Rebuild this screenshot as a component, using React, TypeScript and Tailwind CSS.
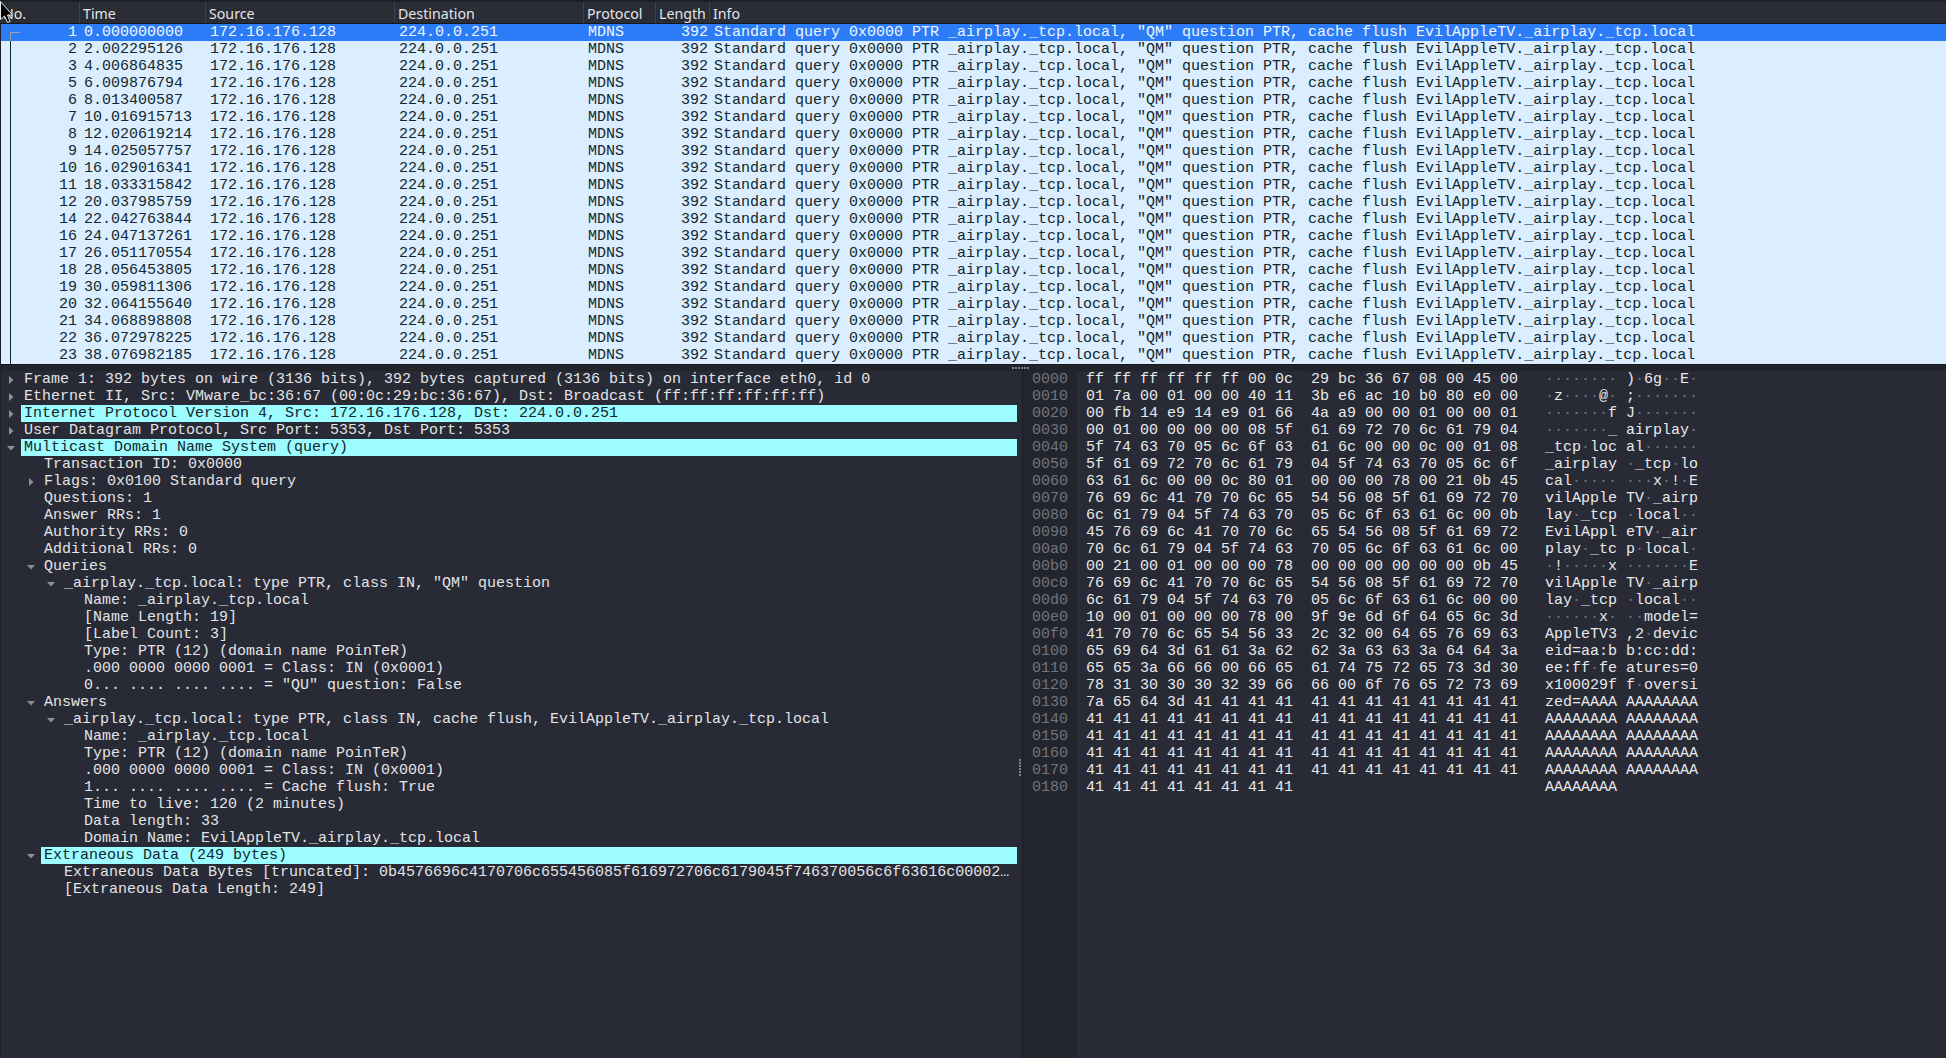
import * as React from "react";

const packets = [
  ["1", "0.000000000"],
  ["2", "2.002295126"],
  ["3", "4.006864835"],
  ["5", "6.009876794"],
  ["6", "8.013400587"],
  ["7", "10.016915713"],
  ["8", "12.020619214"],
  ["9", "14.025057757"],
  ["10", "16.029016341"],
  ["11", "18.033315842"],
  ["12", "20.037985759"],
  ["14", "22.042763844"],
  ["16", "24.047137261"],
  ["17", "26.051170554"],
  ["18", "28.056453805"],
  ["19", "30.059811306"],
  ["20", "32.064155640"],
  ["21", "34.068898808"],
  ["22", "36.072978225"],
  ["23", "38.076982185"],
];

const info =
  'Standard query 0x0000 PTR _airplay._tcp.local, "QM" question PTR, cache flush EvilAppleTV._airplay._tcp.local';

type TreeRow = { level: number; text: string; arrow?: "right" | "down"; hl?: boolean };

const tree: TreeRow[] = [
  { level: 0, arrow: "right", text: "Frame 1: 392 bytes on wire (3136 bits), 392 bytes captured (3136 bits) on interface eth0, id 0" },
  { level: 0, arrow: "right", text: "Ethernet II, Src: VMware_bc:36:67 (00:0c:29:bc:36:67), Dst: Broadcast (ff:ff:ff:ff:ff:ff)" },
  { level: 0, arrow: "right", hl: true, text: "Internet Protocol Version 4, Src: 172.16.176.128, Dst: 224.0.0.251" },
  { level: 0, arrow: "right", text: "User Datagram Protocol, Src Port: 5353, Dst Port: 5353" },
  { level: 0, arrow: "down", hl: true, text: "Multicast Domain Name System (query)" },
  { level: 1, text: "Transaction ID: 0x0000" },
  { level: 1, arrow: "right", text: "Flags: 0x0100 Standard query" },
  { level: 1, text: "Questions: 1" },
  { level: 1, text: "Answer RRs: 1" },
  { level: 1, text: "Authority RRs: 0" },
  { level: 1, text: "Additional RRs: 0" },
  { level: 1, arrow: "down", text: "Queries" },
  { level: 2, arrow: "down", text: '_airplay._tcp.local: type PTR, class IN, "QM" question' },
  { level: 3, text: "Name: _airplay._tcp.local" },
  { level: 3, text: "[Name Length: 19]" },
  { level: 3, text: "[Label Count: 3]" },
  { level: 3, text: "Type: PTR (12) (domain name PoinTeR)" },
  { level: 3, text: ".000 0000 0000 0001 = Class: IN (0x0001)" },
  { level: 3, text: '0... .... .... .... = "QU" question: False' },
  { level: 1, arrow: "down", text: "Answers" },
  { level: 2, arrow: "down", text: "_airplay._tcp.local: type PTR, class IN, cache flush, EvilAppleTV._airplay._tcp.local" },
  { level: 3, text: "Name: _airplay._tcp.local" },
  { level: 3, text: "Type: PTR (12) (domain name PoinTeR)" },
  { level: 3, text: ".000 0000 0000 0001 = Class: IN (0x0001)" },
  { level: 3, text: "1... .... .... .... = Cache flush: True" },
  { level: 3, text: "Time to live: 120 (2 minutes)" },
  { level: 3, text: "Data length: 33" },
  { level: 3, text: "Domain Name: EvilAppleTV._airplay._tcp.local" },
  { level: 1, arrow: "down", hl: true, text: "Extraneous Data (249 bytes)" },
  { level: 2, text: "Extraneous Data Bytes [truncated]: 0b4576696c4170706c655456085f616972706c6179045f746370056c6f63616c00002…" },
  { level: 2, text: "[Extraneous Data Length: 249]" },
];

const hexDump = [
  "ff ff ff ff ff ff 00 0c 29 bc 36 67 08 00 45 00",
  "01 7a 00 01 00 00 40 11 3b e6 ac 10 b0 80 e0 00",
  "00 fb 14 e9 14 e9 01 66 4a a9 00 00 01 00 00 01",
  "00 01 00 00 00 00 08 5f 61 69 72 70 6c 61 79 04",
  "5f 74 63 70 05 6c 6f 63 61 6c 00 00 0c 00 01 08",
  "5f 61 69 72 70 6c 61 79 04 5f 74 63 70 05 6c 6f",
  "63 61 6c 00 00 0c 80 01 00 00 00 78 00 21 0b 45",
  "76 69 6c 41 70 70 6c 65 54 56 08 5f 61 69 72 70",
  "6c 61 79 04 5f 74 63 70 05 6c 6f 63 61 6c 00 0b",
  "45 76 69 6c 41 70 70 6c 65 54 56 08 5f 61 69 72",
  "70 6c 61 79 04 5f 74 63 70 05 6c 6f 63 61 6c 00",
  "00 21 00 01 00 00 00 78 00 00 00 00 00 00 0b 45",
  "76 69 6c 41 70 70 6c 65 54 56 08 5f 61 69 72 70",
  "6c 61 79 04 5f 74 63 70 05 6c 6f 63 61 6c 00 00",
  "10 00 01 00 00 00 78 00 9f 9e 6d 6f 64 65 6c 3d",
  "41 70 70 6c 65 54 56 33 2c 32 00 64 65 76 69 63",
  "65 69 64 3d 61 61 3a 62 62 3a 63 63 3a 64 64 3a",
  "65 65 3a 66 66 00 66 65 61 74 75 72 65 73 3d 30",
  "78 31 30 30 30 32 39 66 66 00 6f 76 65 72 73 69",
  "7a 65 64 3d 41 41 41 41 41 41 41 41 41 41 41 41",
  "41 41 41 41 41 41 41 41 41 41 41 41 41 41 41 41",
  "41 41 41 41 41 41 41 41 41 41 41 41 41 41 41 41",
  "41 41 41 41 41 41 41 41 41 41 41 41 41 41 41 41",
  "41 41 41 41 41 41 41 41 41 41 41 41 41 41 41 41",
  "41 41 41 41 41 41 41 41",
];

const mono = "font-['Liberation_Mono',monospace] text-[15px] leading-[17px] whitespace-pre";

const indentWidth = ["w-[20px]", "w-[40px]", "w-[60px]", "w-[80px]"];

const Arrow = ({ dir }: { dir: "right" | "down" }) => (
  <svg width="8" height="8" viewBox="0 0 8 8" className="text-[#8d9098]">
    {dir === "right" ? (
      <polygon points="2,0 6.5,4 2,8" fill="currentColor" />
    ) : (
      <polygon points="0,2 8,2 4,6.5" fill="currentColor" />
    )}
  </svg>
);

const HeaderCell = ({ className, label }: { className: string; label: string }) => (
  <div className={`${className} h-full pl-[3px] border-r border-[#40434d] leading-[23px]`}>{label}</div>
);

const AsciiCell = ({ byte }: { byte: string }) => {
  const code = parseInt(byte, 16);
  if (code > 32 && code < 127) return <span>{String.fromCharCode(code)}</span>;
  return <span className="text-[#6f727b]">·</span>;
};

const HexLine = ({ line, index }: { line: string; index: number }) => {
  const bytes = line.split(" ");
  const first = bytes.slice(0, 8);
  const second = bytes.slice(8);
  const offset = (index * 16).toString(16).padStart(4, "0");
  return (
    <div className={`flex h-[17px] ${mono}`}>
      <div className="w-[54px] shrink-0 bg-[#23252e] pl-[9px] text-[#71747c]">{offset}</div>
      <div className="w-[234px] shrink-0 pl-[9px]">{first.join(" ")}</div>
      <div className="w-[234px] shrink-0">{second.join(" ")}</div>
      <div className="w-[81px] shrink-0">
        {first.map((b, i) => (
          <AsciiCell key={i} byte={b} />
        ))}
      </div>
      <div>
        {second.map((b, i) => (
          <AsciiCell key={i} byte={b} />
        ))}
      </div>
    </div>
  );
};

const App: React.FC = () => {
  return (
    <div className="relative flex h-[1058px] w-[1946px] flex-col overflow-hidden bg-[#282a35] text-[#e3e4e7]">
      {/* packet list */}
      <div className="flex h-[24px] shrink-0 items-center border-t-2 border-b border-t-[#1e2028] border-b-[#16181d] bg-[#2a2c36] font-['Noto_Sans',sans-serif] text-[14.2px] text-[#e4e5e8]">
        <HeaderCell className="w-[80px]" label="No." />
        <HeaderCell className="w-[126px]" label="Time" />
        <HeaderCell className="w-[189px]" label="Source" />
        <HeaderCell className="w-[189px]" label="Destination" />
        <HeaderCell className="w-[72px]" label="Protocol" />
        <HeaderCell className="w-[54px]" label="Length" />
        <div className="h-full flex-1 pl-[3px] leading-[23px]">Info</div>
      </div>
      <div className="relative shrink-0 border-l border-[#1e2028]">
        {packets.map(([no, time], i) => (
          <div
            key={no}
            className={`flex h-[17px] ${mono} ${i === 0 ? "bg-[#2c7bf7] text-[#eef5ff]" : "bg-[#daeeff] text-[#12272e]"}`}
          >
            <div className="w-[79px] pr-[3px] text-right">{no}</div>
            <div className="w-[126px] pl-[4px]">{time}</div>
            <div className="w-[189px] pl-[4px]">172.16.176.128</div>
            <div className="w-[189px] pl-[4px]">224.0.0.251</div>
            <div className="w-[73px] pl-[4px]">MDNS</div>
            <div className="w-[53px] pr-[2px] text-right">392</div>
            <div className="flex-1 pl-[4px]">{info}</div>
          </div>
        ))}
        <div className="absolute left-[9px] top-[8px] h-px w-[10px] bg-[#9aa0a8]" />
        <div className="absolute left-[9px] top-[8px] h-[9px] w-px bg-[#9aa0a8]" />
        <div className="absolute left-[9px] top-[17px] bottom-0 w-px bg-[#12272e]" />
      </div>

      {/* split handle */}
      <div className="flex h-[7px] shrink-0 items-start border-t border-[#15171c] bg-[#22242c] pl-[1012px]">
        <div className="mt-[2px] flex gap-[1px]">
          {[0, 1, 2, 3, 4, 5].map((d) => (
            <div key={d} className="h-[2px] w-[2px] bg-[#7d8088]" />
          ))}
        </div>
      </div>

      <div className="flex flex-1">
        {/* packet details */}
        <div className="w-[1017px] shrink-0 border-l border-[#1e2028]">
          {tree.map((row, i) => (
            <div key={i} className={`flex h-[17px] ${mono}`}>
              <div className={`${indentWidth[row.level]} flex shrink-0 items-center justify-end pr-[6px]`}>
                {row.arrow && <Arrow dir={row.arrow} />}
              </div>
              <div
                className={`min-w-0 flex-1 overflow-hidden pl-[3px] ${row.hl ? "bg-[#9dfcff] text-[#10262c]" : ""}`}
              >
                {row.text}
              </div>
            </div>
          ))}
        </div>

        {/* vertical splitter */}
        <div className="relative w-[6px] shrink-0 border-r border-[#1c1e25]">
          <div className="absolute left-[2px] top-[388px] flex flex-col gap-[1px]">
            {[0, 1, 2, 3, 4, 5].map((d) => (
              <div key={d} className="h-[2px] w-[2px] bg-[#7d8088]" />
            ))}
          </div>
        </div>

        {/* packet bytes */}
        <div className="relative flex-1 text-[#e8e9eb]">
          <div className="absolute inset-y-0 left-0 w-[54px] bg-[#23252e]" />
          <div className="relative">
            {hexDump.map((line, i) => (
              <HexLine key={i} line={line} index={i} />
            ))}
          </div>
        </div>
      </div>

      {/* mouse pointer */}
      <svg width="16" height="26" viewBox="0 0 16 26" className="absolute left-0 top-0">
        <path d="M0.5 1.5 L0.5 19.5 L4.5 16 L7.5 22.5 L10 21.5 L7.5 15 L12.5 15 Z" fill="#000" stroke="#e8e8e8" strokeWidth="1" />
      </svg>
    </div>
  );
};

export default App;
